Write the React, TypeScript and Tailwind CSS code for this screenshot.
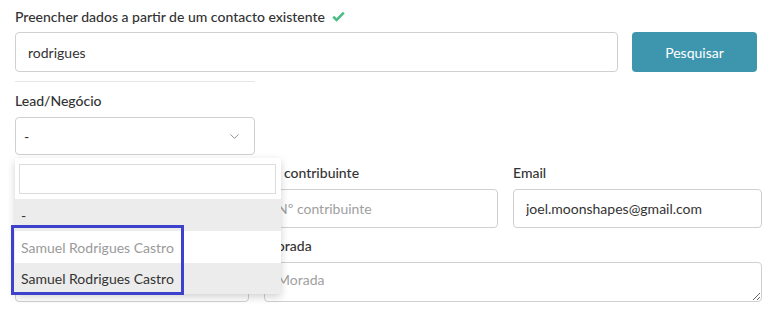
import { ChevronDown } from 'lucide-react';

const field =
  'h-[39px] w-full rounded-[4px] border border-[#d0d0d0] bg-white px-3 text-[14px] text-[#333] placeholder:text-[#a0a0a0] outline-none';

function Label({ children }: { children: React.ReactNode }) {
  return <div className="mb-[7px] text-[14px] font-medium leading-[18px] text-[#333]">{children}</div>;
}

export default function App() {
  return (
    <div className="relative h-[317px] w-[772px] overflow-hidden bg-white px-[15px] pt-[8px] font-['Lato','Noto_Sans',sans-serif]">
      <div className="flex items-center gap-[7px] text-[14px] font-medium leading-[18px] text-[#333]">
        Preencher dados a partir de um contacto existente
        <svg width="13" height="11" viewBox="0 0 13 11" className="mt-[-2px]">
          <path d="M1.2 5.8 L4.6 9 L11.8 1.6" fill="none" stroke="#4dbd86" strokeWidth="2.6" />
        </svg>
      </div>

      <div className="mt-[6px] flex gap-[14px]">
        <input className={field + ' h-[40px] flex-1'} defaultValue="rodrigues" />
        <button className="h-[40px] w-[125px] rounded-[4px] bg-[#3e96ae] text-[14px] text-white">Pesquisar</button>
      </div>

      <div className="mt-[9px] h-px w-[240px] bg-[#e6e6e6]" />

      <div className="mt-[10px]">
        <Label>Lead/Negócio</Label>
      </div>
      <div className="relative w-[240px]">
        <div className="flex h-[38px] items-center justify-between rounded-[4px] border border-[#d0d0d0] bg-white pl-[8px] pr-[12px] text-[14px] text-[#333]">
          <span>-</span>
          <ChevronDown size={15} strokeWidth={1.3} className="text-[#777]" />
        </div>

        {/* dropdown aberto */}
        <div className="absolute left-0 top-[41px] z-10 w-[266px] bg-white pt-[6px] shadow-[0_3px_8px_rgba(0,0,0,0.18)]">
          <div className="px-[4px] pb-[5px] pr-[5px]">
            <input className="h-[30px] w-full border border-[#dcdcdc] px-2 text-[14px] outline-none" />
          </div>
          <div className="flex h-[32px] items-center bg-[#ececec] px-[6px] text-[14px] text-[#333]">-</div>
          <div className="flex h-[32px] items-center bg-white px-[6px] text-[14px] text-[#9a9a9a]">Samuel Rodrigues Castro</div>
          <div className="flex h-[31px] items-center bg-[#ececec] px-[6px] text-[14px] text-[#333]">Samuel Rodrigues Castro</div>
        </div>
        <div className="absolute left-[-4px] top-[108px] z-20 h-[70px] w-[173px] border-[3px] border-[#3d41cc]" />
      </div>

      <div className="mt-[9px] grid grid-cols-[234px_234px_249px] gap-x-[15px]">
        <div>
          <Label>Nome</Label>
          <input className={field} />
        </div>
        <div>
          <Label>Nº contribuinte</Label>
          <input className={field} placeholder="Nº contribuinte" />
        </div>
        <div>
          <Label>Email</Label>
          <input className={field} defaultValue="joel.moonshapes@gmail.com" />
        </div>
      </div>

      <div className="mt-[9px] grid grid-cols-[234px_498px] gap-x-[15px]">
        <div>
          <Label>Telefone</Label>
          <input className={field + ' h-[40px]'} />
        </div>
        <div>
          <Label>Morada</Label>
          <textarea className={field + ' h-[40px] resize-y py-[8px] leading-[18px]'} placeholder="Morada" />
        </div>
      </div>

      <div className="mt-[10px]">
        <Label>Região de envio de IVA</Label>
      </div>
    </div>
  );
}
